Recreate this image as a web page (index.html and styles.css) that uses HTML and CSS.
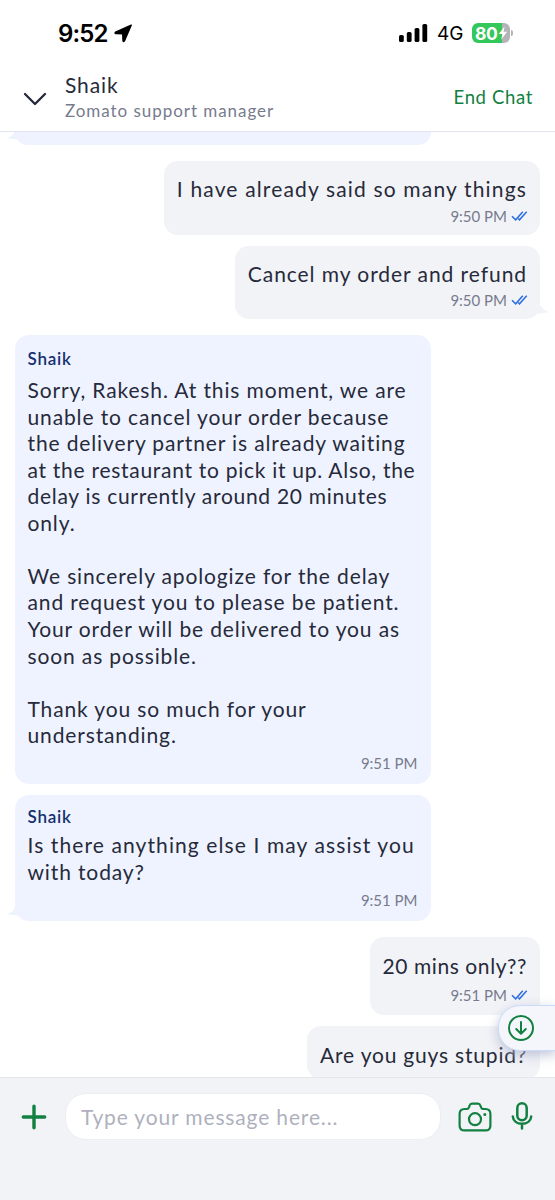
FILE: index.html
```html
<!DOCTYPE html>
<html lang="en">
<head>
    <meta charset="UTF-8">
    <meta name="viewport" content="width=device-width, initial-scale=1.0">
    <title>Support Chat</title>
    <link rel="stylesheet" href="styles.css">
</head>
<body>
    <svg class="sprite">
        <symbol id="ticks" viewBox="0 0 17 12">
            <path d="M1 6.2 4.7 9.8 11.8 1.8M7.3 8.6 8.5 9.8 15.7 1.8" fill="none" stroke="#2b6de0" stroke-width="1.5"/>
        </symbol>
        <symbol id="tail" viewBox="0 0 14 10">
            <path d="M7 0C7 3 4 4.5 0 6C5 7 10 7.5 14 7.5V0Z" fill="currentColor"/>
        </symbol>
    </svg>

    <div class="phone">
        <div class="status-bar">
            <span class="clock">9:52</span>
            <svg class="location" width="19" height="19" viewBox="0 0 19 19">
                <path d="M17.2 1.2 1.5 8.2C.8 8.6 1 9.5 1.8 9.5L8.7 9.8 9 16.7C9.1 17.6 10 17.7 10.4 17Z" fill="#000" stroke="#000" stroke-width="1.4" stroke-linejoin="round"/>
            </svg>
            <div class="status-icons">
                <svg width="29" height="18" viewBox="0 0 29 18">
                    <rect x="0" y="11" width="4.8" height="7" rx="1.6"/>
                    <rect x="7.8" y="8" width="4.8" height="10" rx="1.6"/>
                    <rect x="15.6" y="4" width="4.8" height="14" rx="1.6"/>
                    <rect x="23.4" y="0" width="4.8" height="18" rx="1.6"/>
                </svg>
                <span class="network">4G</span>
                <div class="battery">
                    <span>80</span>
                    <svg width="10" height="14" viewBox="0 0 10 14">
                        <path d="M6.5.5.8 8H4.4L3.2 13.5 9.2 5.8H5.6Z" fill="#fff"/>
                    </svg>
                </div>
                <i class="battery-tip"></i>
            </div>
        </div>

        <div class="header">
            <svg class="chevron" width="24" height="14" viewBox="0 0 24 14">
                <path d="M2 2 12 12 22 2" fill="none" stroke="#24283a" stroke-width="2.3" stroke-linecap="round" stroke-linejoin="round"/>
            </svg>
            <div class="agent">
                <div class="agent-name">Shaik</div>
                <div class="agent-role">Zomato support manager</div>
            </div>
            <a class="end-chat">End Chat</a>
        </div>

        <div class="chat">
            <div class="bubble theirs previous">
                <svg class="tail"><use href="#tail"/></svg>
            </div>

            <div class="bubble mine first">
                <p class="wide">I have already said so many things</p>
                <div class="time">9:50 PM <svg class="ticks"><use href="#ticks"/></svg></div>
            </div>
            <div class="bubble mine">
                <p>Cancel my order and refund</p>
                <div class="time">9:50 PM <svg class="ticks"><use href="#ticks"/></svg></div>
                <svg class="tail"><use href="#tail"/></svg>
            </div>

            <div class="bubble theirs long">
                <div class="sender">Shaik</div>
                <p>Sorry, Rakesh. At this moment, we are<br>unable to cancel your order because<br>the delivery partner is already waiting<br><span class="snug">at the restaurant to pick it up. Also, the<br>delay is currently around 20 minutes</span><br>only.</p>
                <p>We sincerely apologize for the delay<br>and request you to please be patient.<br>Your order will be delivered to you as<br>soon as possible.</p>
                <p>Thank you so much for your<br>understanding.</p>
                <div class="time">9:51 PM</div>
            </div>
            <div class="bubble theirs short">
                <div class="sender">Shaik</div>
                <p><span class="wide">Is there anything else I may assist you</span><br>with today?</p>
                <div class="time">9:51 PM</div>
                <svg class="tail"><use href="#tail"/></svg>
            </div>

            <div class="bubble mine tall after-reply">
                <p>20 mins only??</p>
                <div class="time">9:51 PM <svg class="ticks"><use href="#ticks"/></svg></div>
            </div>
            <div class="bubble mine tall">
                <p class="last">Are you guys stupid?</p>
            </div>

            <div class="scroll-down">
                <svg width="28" height="28" viewBox="0 0 28 28" fill="none" stroke="#128041" stroke-width="2" stroke-linecap="round" stroke-linejoin="round">
                    <circle cx="14" cy="14" r="12"/>
                    <path d="M14 8V19.5M9.2 15 14 19.7 18.8 15"/>
                </svg>
            </div>
        </div>

        <div class="composer">
            <svg class="plus" width="26" height="26" viewBox="0 0 26 26">
                <path d="M13 2.3V23.7M2.3 13H23.7" stroke="#128041" stroke-width="3.4" stroke-linecap="round"/>
            </svg>
            <div class="message-input">Type your message here...</div>
            <svg class="camera" width="34" height="30" viewBox="0 0 34 30" fill="none" stroke="#128041" stroke-width="2.2" stroke-linejoin="round">
                <path d="M6.5 7H9.2C10.2 7 10.6 6.3 11 5.2L11.5 3.8C12 2.3 12.7 1.6 14 1.6H20C21.3 1.6 22 2.3 22.5 3.8L23 5.2C23.4 6.3 23.8 7 24.8 7H27.5C30.5 7 32.4 8.9 32.4 12V23.4C32.4 26.5 30.5 28.4 27.5 28.4H6.5C3.5 28.4 1.6 26.5 1.6 23.4V12C1.6 8.9 3.5 7 6.5 7Z"/>
                <circle cx="17" cy="17.2" r="6"/>
                <circle cx="26.8" cy="12.4" r="1.5" fill="#128041" stroke="none"/>
            </svg>
            <svg class="mic" width="22" height="28" viewBox="0 0 22 28" fill="none" stroke="#128041" stroke-width="2.5" stroke-linecap="round">
                <rect x="6.3" y="1.3" width="9.4" height="17" rx="4.7"/>
                <path d="M1.8 14.5C2.2 19 6 21.8 11 21.8S19.8 19 20.2 14.5M11 22V26.5"/>
            </svg>
        </div>
    </div>
</body>
</html>
```

FILE: styles.css
```css
* {
    box-sizing: border-box;
}
body {
    margin: 0;
    background-color: #fff;
    font-family: Lato, "Open Sans", sans-serif;
    color: #262a3a;
}
p {
    margin: 0;
}
svg {
    display: block;
    flex: none;
}
.sprite {
    display: none;
}
.phone {
    display: flex;
    flex-direction: column;
    height: 1200px;
    overflow: hidden;
}

/* status bar */
.status-bar {
    display: flex;
    align-items: center;
    height: 66px;
    padding: 0 42px 0 58px;
    color: #000;
    font-family: Inter, sans-serif;
}
.clock {
    width: 51px;
    font-size: 24px;
    font-weight: 600;
    letter-spacing: -0.9px;
}
.location {
    margin-left: 5px;
}
.status-icons {
    display: flex;
    align-items: center;
    margin-left: auto;
}
.network {
    width: 27px;
    margin: 1px 8px 0 9px;
    font-size: 19px;
    white-space: nowrap;
}
.battery {
    display: flex;
    align-items: center;
    width: 38px;
    height: 20px;
    padding-left: 3px;
    border-radius: 6px;
    background: linear-gradient(90deg, #34c759 80%, #b4b4b8 80%);
    color: #fff;
    font-size: 17.5px;
    font-weight: 700;
    letter-spacing: -0.3px;
}
.battery-tip {
    width: 2px;
    height: 6px;
    margin-left: 1px;
    border-radius: 0 2px 2px 0;
    background-color: #b4b4b8;
}

/* header */
.header {
    display: flex;
    align-items: center;
    height: 66px;
    padding: 0 22px 0 23px;
    border-bottom: 1px solid #e3e6ee;
}
.agent {
    flex: 1;
    padding: 0 0 2px 18px;
}
.agent-name {
    font-size: 21px;
    line-height: 26px;
    letter-spacing: 0.9px;
}
.agent-role {
    color: #777b8d;
    font-size: 17px;
    line-height: 25px;
    letter-spacing: 0.95px;
}
.end-chat {
    margin-bottom: 4px;
    color: #128041;
    font-size: 18.5px;
    letter-spacing: 0.65px;
}

/* messages */
.chat {
    position: relative;
    display: flex;
    flex: 1;
    flex-direction: column;
    align-items: flex-start;
    gap: 11px;
    min-height: 0;
    padding: 0 15px 0 14.5px;
    overflow: hidden;
}
.bubble {
    position: relative;
    flex: none;
    padding: 10px 13px;
    border-radius: 14px;
    font-size: 21px;
    line-height: 26.55px;
    letter-spacing: 0.87px;
    white-space: nowrap;
}
.wide {
    letter-spacing: 1.1px;
}
.mine .wide {
    letter-spacing: 1.16px;
}
.snug {
    letter-spacing: 0.72px;
}
.theirs {
    width: 416px;
    background-color: #eff3ff;
}
.mine {
    align-self: flex-end;
    padding-top: 15px;
    background-color: #f2f3f7;
    letter-spacing: 0.94px;
}
.previous {
    height: 13px;
    padding: 0;
    border-radius: 0 0 14px 14px;
}
.first {
    margin-top: 5px;
}
.long {
    height: 449px;
    margin-top: 5px;
}
.long p + p {
    margin-top: 26.55px;
}
.after-reply {
    margin-top: 5px;
}
.tall {
    padding-top: 16px;
    padding-bottom: 11px;
    letter-spacing: 0.57px;
}
.last {
    letter-spacing: 0.8px;
}
.sender {
    margin-bottom: 5px;
    color: #14306f;
    font-size: 17px;
    font-weight: 600;
    line-height: 27px;
    letter-spacing: 0.75px;
}
.time {
    display: flex;
    justify-content: flex-end;
    align-items: center;
    gap: 4px;
    margin-top: 4px;
    color: #777b8d;
    font-size: 15px;
    line-height: 18px;
    letter-spacing: 0;
}
.long .time {
    margin-top: 5px;
}
.short {
    padding-top: 8px;
    padding-bottom: 12px;
}
.short .sender {
    margin-bottom: 2px;
}
.short .time,
.tall .time {
    margin-top: 6px;
}
.ticks {
    width: 17px;
    height: 12px;
    margin-right: -1px;
}
.tail {
    position: absolute;
    bottom: 3px;
    left: -8px;
    width: 14px;
    height: 10px;
    color: #eff3ff;
}
.mine .tail {
    right: -9px;
    left: auto;
    color: #f2f3f7;
    transform: scaleX(-1);
}
.scroll-down {
    position: absolute;
    right: -1px;
    bottom: 26px;
    width: 58px;
    height: 46px;
    padding: 8px 0 0 8px;
    border: 1px solid #cbdcfa;
    border-radius: 22px 0 0 22px;
    background-color: #f4f6fb;
    box-shadow: 0 4px 12px rgba(175, 183, 205, 0.8);
}

/* composer */
.composer {
    display: flex;
    align-items: flex-start;
    height: 123px;
    padding: 15px 22px 0 21px;
    border-top: 1px solid #e5e6eb;
    background-color: #f2f3f7;
}
.plus {
    margin-top: 11px;
}
.message-input {
    width: 376px;
    height: 47px;
    margin-left: 18px;
    padding-left: 15px;
    border: 1px solid #eceef3;
    border-radius: 21px;
    background-color: #fff;
    color: #aeb1bd;
    font-size: 21px;
    line-height: 45px;
    letter-spacing: 0.85px;
}
.camera {
    margin: 9px 0 0 17px;
}
.mic {
    margin: 9px 0 0 19px;
}
```
